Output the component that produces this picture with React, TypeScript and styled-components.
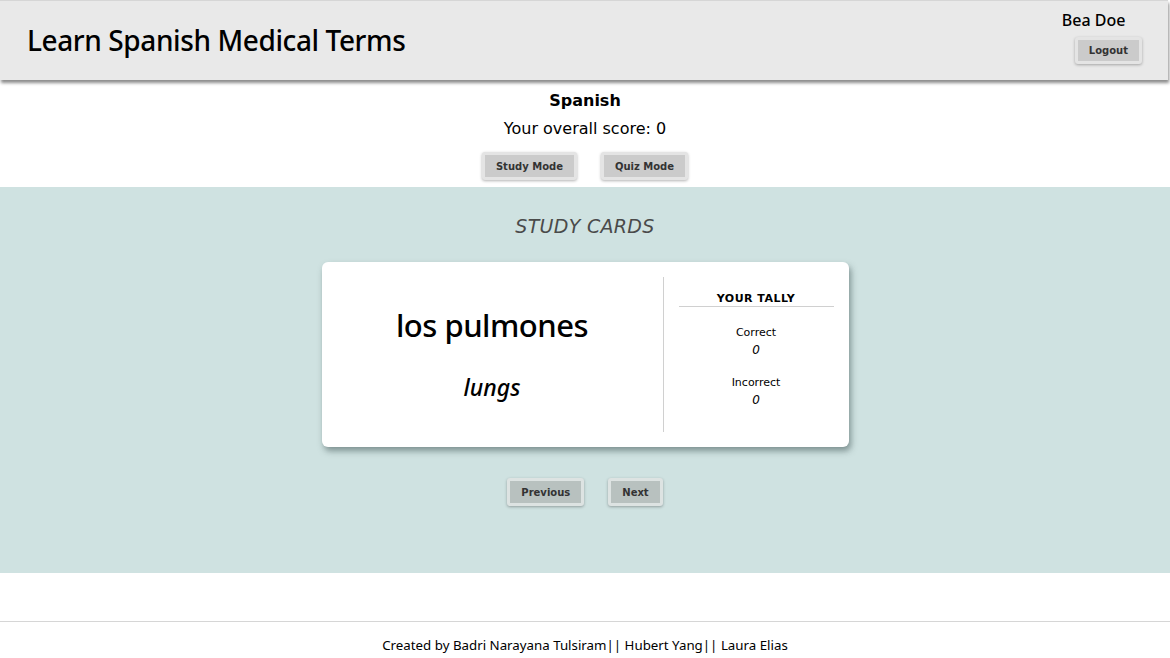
import React from 'react';
import styled, { createGlobalStyle } from 'styled-components';

const GlobalStyle = createGlobalStyle`
  html, body {
    margin: 0;
    padding: 0;
    background: #ffffff;
  }
  body {
    font-family: 'DejaVu Sans', Verdana, sans-serif;
    color: #000;
  }
`;

const UBUNTU = `'Noto Sans', 'Open Sans', sans-serif`;

const Page = styled.div`
  display: flex;
  flex-direction: column;
  min-height: 658px;
`;

const Header = styled.header`
  height: 79px;
  margin-right: 2px;
  border-top: 1px solid #d6d6d6;
  background: #e9e9e9;
  box-shadow: 1px 3px 3px rgba(0, 0, 0, 0.45);
  display: flex;
  justify-content: space-between;
  align-items: flex-start;
  padding: 0 27px;
`;

const Title = styled.h1`
  margin: 21px 0 0;
  font-family: ${UBUNTU};
  font-weight: 500;
  font-size: 28px;
  letter-spacing: -0.4px;
  line-height: 36px;
`;

const UserBox = styled.div`
  display: flex;
  flex-direction: column;
  align-items: center;
  padding-top: 8px;
  margin-right: -1px;
`;

const UserName = styled.div`
  font-family: ${UBUNTU};
  font-weight: 500;
  font-size: 16px;
  line-height: 22px;
  margin-left: -1px;
  align-self: flex-start;
`;

const Button = styled.button<{ $onTeal?: boolean }>`
  font-family: 'DejaVu Sans', Verdana, sans-serif;
  font-weight: 700;
  font-size: 10px;
  color: #333;
  height: 28px;
  padding: 0 11px;
  border: 3px solid ${(p) => (p.$onTeal ? '#dde3e2' : '#e4e4e4')};
  border-radius: 3px;
  background: ${(p) => (p.$onTeal ? '#b8c1bf' : '#cbcbcb')};
  box-shadow: 0 1px 3px rgba(0, 0, 0, 0.3);
  cursor: pointer;
`;

const LogoutButton = styled(Button)`
  margin-top: 6px;
  height: 27px;
  padding: 0 11px;
  margin-left: 12px;
`;

const Intro = styled.section`
  display: flex;
  flex-direction: column;
  align-items: center;
  padding-top: 10px;
  padding-bottom: 7px;
`;

const Language = styled.div`
  font-weight: 700;
  font-size: 16px;
  line-height: 22px;
`;

const Score = styled.div`
  font-size: 16px;
  line-height: 22px;
  margin-top: 6px;
`;

const ModeRow = styled.div`
  display: flex;
  gap: 24px;
  margin-top: 12px;
`;

const StudyArea = styled.section`
  background: #cfe2e1;
  height: 386px;
  display: flex;
  flex-direction: column;
  align-items: center;
`;

const SectionTitle = styled.h2`
  margin: 26px 0 0;
  font-size: 19px;
  font-style: italic;
  font-weight: 400;
  color: #4a4a4a;
  line-height: 26px;
  letter-spacing: 0.3px;
`;

const Card = styled.div`
  margin-top: 23px;
  width: 527px;
  height: 185px;
  background: #fff;
  border-radius: 6px;
  box-shadow: 2px 4px 6px rgba(60, 80, 80, 0.55);
  display: grid;
  grid-template-columns: 342px 1fr;
  padding: 15px 0;
  box-sizing: border-box;
`;

const Face = styled.div`
  border-right: 1px solid #d0d0d0;
  display: flex;
  flex-direction: column;
  align-items: center;
  font-family: ${UBUNTU};
  padding-top: 27px;
`;

const Term = styled.div`
  font-size: 31px;
  font-weight: 500;
  line-height: 42px;
  letter-spacing: -0.5px;
`;

const Translation = styled.div`
  font-size: 23px;
  font-weight: 500;
  font-style: italic;
  line-height: 32px;
  margin-top: 25px;
`;

const Tally = styled.div`
  display: flex;
  flex-direction: column;
  align-items: center;
  padding: 15px 15px 0;
`;

const TallyTitle = styled.div`
  align-self: stretch;
  text-align: center;
  font-size: 11px;
  font-weight: 700;
  letter-spacing: 0.5px;
  line-height: 14px;
  border-bottom: 1px solid #d0d0d0;
  margin-bottom: 18px;
`;

const TallyLabel = styled.div`
  font-size: 11px;
  line-height: 16px;
`;

const TallyValue = styled.div`
  font-size: 12px;
  font-style: italic;
  line-height: 18px;
  margin-bottom: 16px;
`;

const NavRow = styled.div`
  display: flex;
  gap: 24px;
  margin-top: 31px;
`;

const Spacer = styled.div`
  height: 48px;
`;

const Footer = styled.footer`
  border-top: 1px solid #d6d6d6;
  font-family: ${UBUNTU};
  font-size: 13.3px;
  text-align: center;
  padding-top: 14px;
  line-height: 18px;
`;

export default function App() {
  return (
    <Page>
      <GlobalStyle />
      <Header>
        <Title>Learn Spanish Medical Terms</Title>
        <UserBox>
          <UserName>Bea Doe</UserName>
          <LogoutButton>Logout</LogoutButton>
        </UserBox>
      </Header>

      <Intro>
        <Language>Spanish</Language>
        <Score>Your overall score: 0</Score>
        <ModeRow>
          <Button>Study Mode</Button>
          <Button>Quiz Mode</Button>
        </ModeRow>
      </Intro>

      <StudyArea>
        <SectionTitle>STUDY CARDS</SectionTitle>
        <Card>
          <Face>
            <Term>los pulmones</Term>
            <Translation>lungs</Translation>
          </Face>
          <Tally>
            <TallyTitle>YOUR TALLY</TallyTitle>
            <TallyLabel>Correct</TallyLabel>
            <TallyValue>0</TallyValue>
            <TallyLabel>Incorrect</TallyLabel>
            <TallyValue>0</TallyValue>
          </Tally>
        </Card>
        <NavRow>
          <Button $onTeal>Previous</Button>
          <Button $onTeal>Next</Button>
        </NavRow>
      </StudyArea>

      <Spacer />
      <Footer>Created by Badri Narayana Tulsiram|| Hubert Yang|| Laura Elias</Footer>
    </Page>
  );
}
